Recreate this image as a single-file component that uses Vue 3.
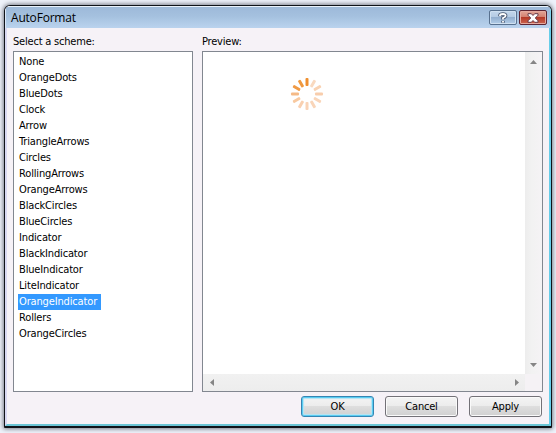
<script setup>
import { ref } from 'vue'

const schemes = [
  'None', 'OrangeDots', 'BlueDots', 'Clock', 'Arrow', 'TriangleArrows',
  'Circles', 'RollingArrows', 'OrangeArrows', 'BlackCircles', 'BlueCircles',
  'Indicator', 'BlackIndicator', 'BlueIndicator', 'LiteIndicator',
  'OrangeIndicator', 'Rollers', 'OrangeCircles',
]
const selected = ref('OrangeIndicator')

// Spoke colours, clockwise from twelve o'clock
const spokes = [
  '#ef8f2f', '#f9d9bf', '#f9d2b2', '#f8cdac', '#f9d5b9', '#f9d5b9',
  '#f9d3b6', '#f9d0b0', '#f8c9a0', '#f5ba86', '#f09a45', '#f0993f',
]
</script>

<template>
  <main class="desktop">
    <section class="dialog">
      <header class="titlebar">
        <h1>AutoFormat</h1>
        <button class="caption help" aria-label="Help">
          <svg width="12" height="12" viewBox="0 0 12 12" fill="none">
            <path d="M3 4.200V3.300Q3.200 2 6 2t2.600 1.700Q8.600 4.800 6 6V7.600M6 8.800v2" stroke="#4c5a72" stroke-width="3.600" />
            <path d="M3 3.900V3.400Q3.200 2 6 2t2.600 1.700Q8.600 4.800 6 6V7.400M6 9v1.600" stroke="#fff" stroke-width="1.800" />
          </svg>
        </button>
        <button class="caption close" aria-label="Close">
          <svg width="12" height="10" viewBox="0 0 12 10">
            <path d="M1 .7h3.300L6 2.500 7.700.7H11v1.500L8.300 5 11 7.800v1.500H7.700L6 7.500 4.300 9.300H1V7.800L3.700 5 1 2.200z" fill="#fff" stroke="#663a49" />
          </svg>
        </button>
      </header>
      <div class="content">
        <div class="panels">
          <div class="scheme-panel">
            <label>Select a scheme:</label>
            <ul class="list">
              <li v-for="name in schemes" :key="name" @click="selected = name">
                <span :class="{ selected: name === selected }">{{ name }}</span>
              </li>
            </ul>
          </div>
          <div class="preview-panel">
            <label>Preview:</label>
            <div class="preview">
              <div class="view">
                <svg class="spinner" width="34" height="34" viewBox="-17 -17 34 34">
                  <rect
                    v-for="(color, i) in spokes" :key="i"
                    x="-1.5" y="-16" width="3" height="8" rx="1"
                    :fill="color" :transform="`rotate(${i * 30})`"
                  />
                </svg>
              </div>
              <div class="scroll vertical">
                <svg width="7" height="4" viewBox="0 0 7 4"><path d="M0 4 3.500 0 7 4z" fill="#858585" /></svg>
                <svg width="7" height="4" viewBox="0 0 7 4"><path d="M0 0h7L3.500 4z" fill="#858585" /></svg>
              </div>
              <div class="scroll horizontal">
                <svg width="4" height="7" viewBox="0 0 4 7"><path d="M4 0v7L0 3.500z" fill="#858585" /></svg>
                <svg width="4" height="7" viewBox="0 0 4 7"><path d="M0 0v7l4-3.500z" fill="#858585" /></svg>
              </div>
              <div class="corner"></div>
            </div>
          </div>
        </div>
        <footer>
          <button class="action default">OK</button>
          <button class="action">Cancel</button>
          <button class="action">Apply</button>
        </footer>
      </div>
    </section>
  </main>
</template>

<style>
body { margin: 0; overflow: hidden; }
</style>

<style scoped>
* { box-sizing: border-box; }
.desktop {
  width: 556px;
  height: 433px;
  padding: 5px 4px;
  background: #eef2fa;
  font: 11px/16px "DejaVu Sans Condensed", "DejaVu Sans", sans-serif;
  font-stretch: condensed;
  letter-spacing: -0.2px;
  color: #000;
}
.dialog {
  width: 548px;
  height: 423px;
  border: 1px solid #101319;
  border-bottom-width: 2px;
  border-radius: 6px 6px 1px 1px;
  background: #f6f2f7;
  box-shadow: 0 0 4px 1px #777b86;
  overflow: hidden;
}
.titlebar {
  height: 22px;
  display: flex;
  align-items: flex-start;
  gap: 2px;
  padding: 3px 3px 0 5px;
  border-top: 1px solid #eaf3fc;
  border-left: 1px solid #dbe8f8;
  border-right: 1px solid #7fd3ed;
  background: linear-gradient(#9db9d9, #a5c1df 45%, #bad3ee);
}
h1 {
  flex: 1;
  margin: -1px 0 0;
  font: 12px/17px "Open Sans", "Noto Sans", sans-serif;
  letter-spacing: -0.2px;
}
button {
  font: inherit;
  letter-spacing: inherit;
  color: inherit;
  padding: 0;
  display: flex;
  align-items: center;
  justify-content: center;
}
.caption {
  width: 28px;
  height: 15px;
  border: 1px solid #58718f;
  border-radius: 2px;
}
.help {
  background: linear-gradient(#c4d7ec, #b3cae3 48%, #93afcf 50%, #b3cee9);
  box-shadow: inset 0 0 0 1px #cfe0f1;
}
.close {
  border-color: #5e2432;
  background: linear-gradient(#e3a698, #d27e6d 48%, #b53a28 50%, #cb6550);
  box-shadow: inset 0 0 0 1px #e4a99e;
}
.content {
  height: 398px;
  padding: 7px 6px 0;
  border: solid #d9d9f2;
  border-width: 0 2px 2px;
  border-right-color: #67cde9;
  border-bottom-color: #6bc5d5;
}
.panels { display: flex; gap: 9px; }
.scheme-panel { width: 180px; }
.preview-panel { width: 341px; }
label { display: block; height: 16px; line-height: 14px; }
.list {
  height: 341px;
  margin: 0;
  padding: 2px 4px;
  list-style: none;
  background: #fff;
  border: 1px solid #828790;
  letter-spacing: -0.15px;
}
li { height: 16px; }
li span { display: inline-block; height: 16px; padding: 0 4px 0 1px; }
.selected { background: #3399ff; color: #fff; }
.preview {
  display: grid;
  grid-template: 1fr 17px / 1fr 17px;
  height: 341px;
  border: 1px solid #828790;
  background: #fff;
}
.view { padding: 25px 0 0 87px; }
.scroll { display: flex; justify-content: space-between; align-items: center; background: #f0f0f0; }
.vertical { flex-direction: column; padding: 8px 0 7px; background: linear-gradient(90deg, #ededed, #f2f2f2 40%, #f5f3f5); }
.horizontal { padding: 0 6px 0 7px; background: linear-gradient(#f1f1f1, #ededed); }
.corner { background: #f5f2f5; }
footer { display: flex; justify-content: flex-end; gap: 11px; margin: 4px 1px 0 0; }
.action {
  width: 73px;
  height: 21px;
  border: 1px solid #737177;
  border-radius: 3px;
  background: linear-gradient(#f4f4f4, #ececec 48%, #dedede 50%, #d0d0d0);
  box-shadow: inset 0 0 0 1px #fafafa;
}
.default { border-color: #3585b3; box-shadow: inset 0 0 0 1px #59cdf2, inset 0 0 1px 2px #b5e4f4; }
</style>
